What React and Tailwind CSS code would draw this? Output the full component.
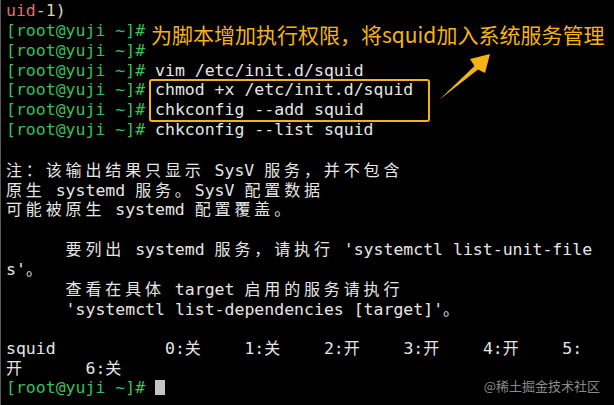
import React from 'react';

const PROMPT = '[root@yuji ~]#';

// 终端里中文占两列，这里给中文单独套一层字体和字距
function Cjk({ text }) {
  const parts = text.split(/([\u3000-\u303f\u4e00-\u9fff\uff00-\uffef]+)/);
  return parts.map((p, i) =>
    i % 2 === 1 ? (
      <span key={i} className="font-['Noto_Sans_CJK_SC',sans-serif] text-[16px] tracking-[3.86px]">
        {p}
      </span>
    ) : (
      <span key={i}>{p}</span>
    )
  );
}

const LINES = [
  { prompt: true, text: '' },
  { prompt: true, text: '' },
  { prompt: true, text: ' vim /etc/init.d/squid' },
  { prompt: true, text: ' chmod +x /etc/init.d/squid' },
  { prompt: true, text: ' chkconfig --add squid' },
  { prompt: true, text: ' chkconfig --list squid' },
  { text: '' },
  { text: '注：该输出结果只显示 SysV 服务，并不包含' },
  { text: '原生 systemd 服务。SysV 配置数据' },
  { text: '可能被原生 systemd 配置覆盖。' },
  { text: '' },
  { text: "      要列出 systemd 服务，请执行 'systemctl list-unit-file" },
  { text: "s'。" },
  { text: '      查看在具体 target 启用的服务请执行' },
  { text: "      'systemctl list-dependencies [target]'。" },
  { text: '' },
  { text: 'squid           0:关    1:关    2:开    3:开    4:开    5:' },
  { text: '开      6:关' },
];

export default function App() {
  return (
    <div className="relative w-[614px] h-[405px] overflow-hidden bg-black border-l border-[#5a5a5a] pl-[5px] pt-[1px] font-['DejaVu_Sans_Mono',monospace] text-[16.5px] leading-[19.85px] text-[#e6e6e6] whitespace-pre">
      <div>
        <span className="text-[#e0706a]">uid</span>
        <span className="text-[#ded3bd]">-1)</span>
      </div>

      {LINES.map((line, idx) => (
        <div key={idx} className="h-[19.85px]">
          {line.prompt && <span className="text-[#33c25a]">{PROMPT}</span>}
          <Cjk text={line.text} />
        </div>
      ))}

      <div>
        <span className="text-[#33c25a]">{PROMPT}</span>{' '}
        <span className="inline-block w-[10px] h-[15px] align-[-2px] bg-[#c4c4c4]"></span>
      </div>

      {/* 标注文字 */}
      <div className="absolute left-[150px] top-[20px] font-['Noto_Sans_CJK_SC',sans-serif] text-[21px] leading-[28px] text-[#f5b316]">
        为脚本增加执行权限，将squid加入系统服务管理
      </div>

      {/* 标注框 */}
      <div className="absolute left-[148px] top-[79px] w-[281px] h-[43px] border-2 border-[#f5b316] rounded-[3px]"></div>

      {/* 箭头 */}
      <svg className="absolute left-0 top-0" width="614" height="405" viewBox="0 0 614 405">
        <polygon
          points="489,54 469,59 473.5,66 438,100 477,69.5 484,73"
          fill="#f5b316"
        />
      </svg>

      {/* 水印 */}
      <div className="absolute right-[14px] bottom-[11px] font-['Noto_Sans_CJK_SC',sans-serif] text-[13px] leading-[16px] text-[#8a8a8a]">
        @稀土掘金技术社区
      </div>
    </div>
  );
}
